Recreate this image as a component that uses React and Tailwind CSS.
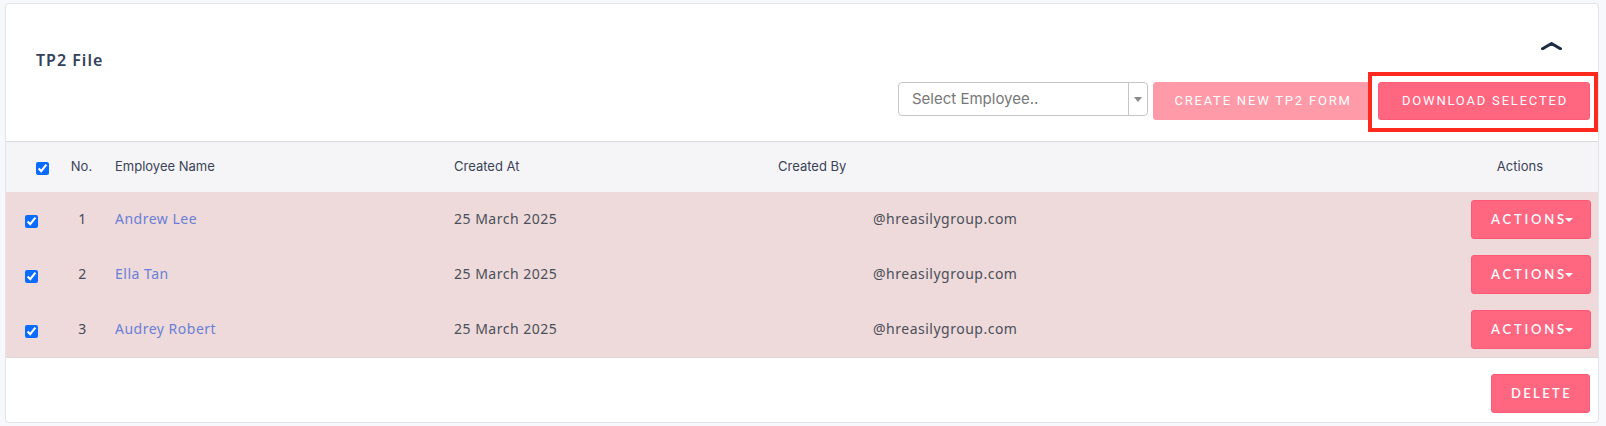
import React from "react";

const rows = [
  { no: 1, name: "Andrew Lee" },
  { no: 2, name: "Ella Tan" },
  { no: 3, name: "Audrey Robert" },
];

function Check({ className }) {
  return (
    <input
      type="checkbox"
      checked
      readOnly
      className={"m-0 block h-[13px] w-[13px] accent-[#0a6cff] " + className}
    />
  );
}

function ActionsButton() {
  return (
    <button className="flex h-[39px] w-[120px] items-center justify-center rounded-[3px] border border-[#ff5874] bg-[#ff6680] pl-[2px] font-['Lato',sans-serif] text-[13px] font-semibold tracking-[2.8px] text-white">
      <span>ACTIONS</span>
      <span className="ml-[-2px] mt-[1px] h-0 w-0 border-x-[4px] border-t-[4px] border-x-transparent border-t-white" />
    </button>
  );
}

export default function App() {
  return (
    <div className="relative min-h-[426px] w-[1606px] bg-[#f7f8fc] pl-[5px] pt-[3px]">
      <div className="flex h-[420px] w-[1594px] flex-col overflow-hidden rounded-[4px] border border-[#e2e4ec] bg-white">
        {/* Header section */}
        <div className="flex h-[138px] flex-col border-b border-[#d9dadf]">
          <div className="flex h-[68px] items-start justify-between pl-[30px] pr-[36px] pt-[38px]">
            <div className="mt-[6px] font-['Noto_Sans',sans-serif] text-[16px] font-semibold leading-[24px] tracking-[1px] text-[#35415a]">
              TP2 File
            </div>
            <svg width="21" height="8" viewBox="0 0 21 8" className="block">
              <path
                d="M1.5 6.8 L10.5 1.5 L19.5 6.8"
                fill="none"
                stroke="#1f2a44"
                strokeWidth="3"
                strokeLinecap="round"
                strokeLinejoin="round"
              />
            </svg>
          </div>
          <div className="mt-[10px] flex items-start justify-end pr-[8px]">
            <div className="flex h-[34px] w-[250px] items-stretch rounded-[4px] border border-[#c6c6c6] bg-white">
              <div className="flex flex-1 items-center pl-[13px] font-['Inter',sans-serif] text-[15px] text-[#777777]">
                Select Employee..
              </div>
              <div className="flex w-[19px] items-center justify-center border-l border-[#c6c6c6]">
                <span className="h-0 w-0 border-x-[4px] border-t-[5px] border-x-transparent border-t-[#8a8a8a]" />
              </div>
            </div>
            <button className="ml-[5px] flex h-[38px] w-[218px] items-center justify-center rounded-[3px] border border-[#ff9aa8] bg-[#ff9aa8] pl-[2px] font-['Roboto',sans-serif] text-[13px] tracking-[1.8px] text-white">
              CREATE NEW TP2 FORM
            </button>
            <button className="ml-[7px] flex h-[38px] w-[212px] items-center justify-center rounded-[3px] border border-[#ff5a76] bg-[#ff6680] pl-[2px] font-['Roboto',sans-serif] text-[13px] tracking-[1.8px] text-white">
              DOWNLOAD SELECTED
            </button>
          </div>
        </div>

        {/* Table header */}
        <div className="flex h-[50px] items-center bg-[#f5f5f8] font-['Inter',sans-serif] text-[13px] text-[#3a4356]">
          <div className="w-[54px] pl-[30px]">
            <Check className="mt-[2px]" />
          </div>
          <div className="w-[43px] text-center">No.</div>
          <div className="w-[12px]" />
          <div className="w-[339px]">Employee Name</div>
          <div className="w-[324px]">Created At</div>
          <div className="flex-1">Created By</div>
          <div className="pr-[55px]">Actions</div>
        </div>

        {/* Rows */}
        <div className="border-b border-[#dcd6d6] bg-[#eedada]">
          {rows.map((r) => (
            <div
              key={r.no}
              className="flex h-[55px] items-center font-['Noto_Sans',sans-serif] text-[14px] tracking-[0.5px]"
            >
              <div className="w-[54px] pl-[19px]">
                <Check className="mt-[3px]" />
              </div>
              <div className="w-[43px] pl-[2px] pb-[2px] text-center text-[#454b57]">{r.no}</div>
              <div className="w-[12px]" />
              <div className="w-[339px] pb-[2px] text-[#6a7fd6]">{r.name}</div>
              <div className="w-[324px] pb-[2px] text-[#4a4f59]">25 March 2025</div>
              <div className="flex-1 pb-[2px] pl-[95px] text-[#4a4f59]">@hreasilygroup.com</div>
              <div className="pr-[7px]">
                <ActionsButton />
              </div>
            </div>
          ))}
        </div>

        {/* Footer */}
        <div className="flex flex-1 justify-end pr-[8px] pt-[16px]">
          <button className="flex h-[39px] w-[99px] items-center justify-center rounded-[3px] border border-[#ff5874] bg-[#ff6680] pl-[2px] font-['Lato',sans-serif] text-[13px] font-semibold tracking-[2.4px] text-white">
            DELETE
          </button>
        </div>
      </div>

      {/* Annotation highlight */}
      <div className="pointer-events-none absolute left-[1368px] top-[72px] h-[60px] w-[230px] border-[4px] border-[#ff2a1e]" />
    </div>
  );
}
